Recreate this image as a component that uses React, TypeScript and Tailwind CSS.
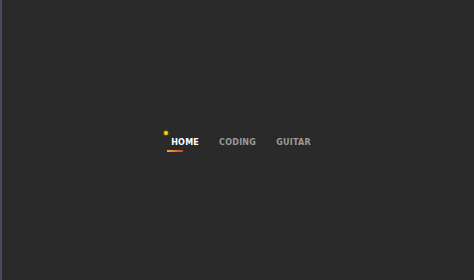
import React from 'react'

const items = ['HOME', 'CODING', 'GUITAR']

export default function App() {
  const active = 0

  return (
    <div className="w-[474px] h-[280px] bg-[#2a2a2a] border-l-2 border-[#4a4a5a] flex items-center justify-center pl-[6px] pt-[6px]">
      <ul className="flex items-center gap-[20px] font-['DejaVu_Sans',sans-serif] font-bold text-[8px] leading-none tracking-[0.25px]">
        {items.map((label, i) => (
          <li key={label} className="relative">
            {i === active && (
              <>
                <span className="absolute left-[-7px] top-[-8px] w-[4px] h-[4px] rounded-full bg-[#f5d000] shadow-[0_0_2px_#f5b000]" />
                <span className="absolute left-[-4px] top-[11px] w-[16px] h-[2px] bg-gradient-to-r from-[#e8b020] via-[#e07a25] to-[#c8402a]" />
              </>
            )}
            <span className={i === active ? 'text-white' : 'text-[#9a9a9a]'}>{label}</span>
          </li>
        ))}
      </ul>
    </div>
  )
}
